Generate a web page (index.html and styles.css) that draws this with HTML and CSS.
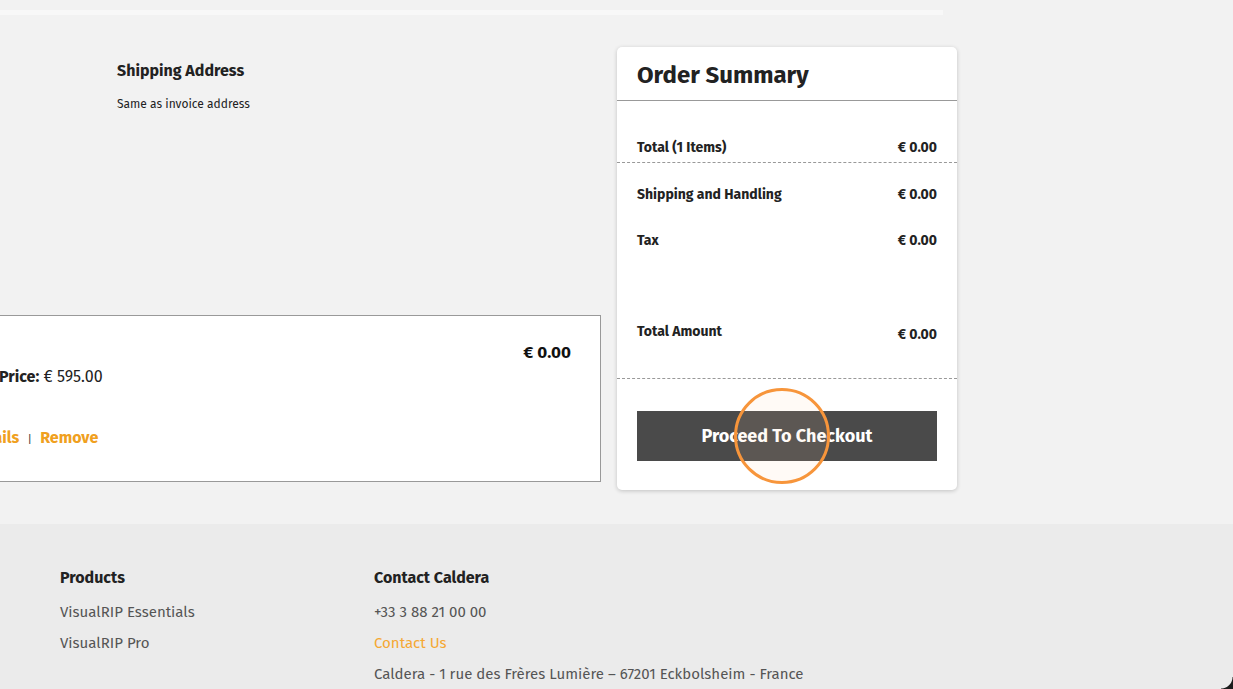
FILE: index.html
```html
<!DOCTYPE html>
<html lang="en">
<head>
    <meta charset="UTF-8">
    <meta name="viewport" content="width=device-width, initial-scale=1.0">
    <title>Checkout - Caldera Store</title>
    <link rel="stylesheet" href="styles.css">
</head>
<body>
    <div class="top-strip"></div>

    <main class="checkout">
        <div class="checkout-left">
            <div class="address-block">
                <h3>Shipping Address</h3>
                <p>Same as invoice address</p>
            </div>

            <div class="cart-item">
                <div class="cart-item-info">
                    <p class="cart-item-price"><strong>Price:</strong> € 595.00</p>
                    <div class="cart-item-links">
                        <a href="#">View Details</a>
                        <span class="sep">|</span>
                        <a href="#">Remove</a>
                    </div>
                </div>
                <div class="cart-item-total">€ 0.00</div>
            </div>
        </div>

        <aside class="summary-card">
            <div class="summary-header">
                <h2>Order Summary</h2>
            </div>
            <div class="summary-body">
                <div class="summary-row first">
                    <span>Total (1 Items)</span>
                    <span>€ 0.00</span>
                </div>
                <div class="summary-row shipping">
                    <span>Shipping and Handling</span>
                    <span>€ 0.00</span>
                </div>
                <div class="summary-row tax">
                    <span>Tax</span>
                    <span>€ 0.00</span>
                </div>
                <div class="summary-row total">
                    <span>Total Amount</span>
                    <span class="total-value">€ 0.00</span>
                </div>
            </div>
            <div class="summary-footer">
                <button type="button" class="checkout-btn">
                    Proceed To Checkout
                    <span class="click-ring"></span>
                </button>
            </div>
        </aside>
    </main>

    <footer class="site-footer">
        <div class="footer-col products">
            <h4>Products</h4>
            <a href="#">VisualRIP Essentials</a>
            <a href="#">VisualRIP Pro</a>
        </div>
        <div class="footer-col contact">
            <h4>Contact Caldera</h4>
            <span>+33 3 88 21 00 00</span>
            <a href="#" class="highlight">Contact Us</a>
            <span>Caldera - 1 rue des Frères Lumière – 67201 Eckbolsheim - France</span>
        </div>
    </footer>

    <div class="window-corner"></div>
</body>
</html>
```

FILE: styles.css
```css
body {
    font-family: 'Fira Sans', 'Lato', 'Liberation Sans', sans-serif;
    background-color: #f2f2f2;
    color: #222;
    margin: 0;
    padding: 0;
}

a {
    text-decoration: none;
}

.top-strip {
    width: 943px;
    height: 5px;
    margin-top: 10px;
    background-color: #f8f8f8;
}

/* main checkout area */
.checkout {
    display: grid;
    grid-template-columns: 601px 340px;
    column-gap: 16px;
    margin-top: 32px;
    padding-bottom: 34px;
}

.checkout-left {
    display: flex;
    flex-direction: column;
}

.address-block {
    padding: 14px 0 0 117px;
}

.address-block h3 {
    font-size: 16px;
    font-weight: 700;
    margin: 0;
    line-height: 20px;
}

.address-block p {
    font-size: 12px;
    margin: 15px 0 0;
    line-height: 16px;
}

.cart-item {
    display: flex;
    justify-content: space-between;
    margin-top: 203px;
    margin-left: -60px;
    height: 165px;
    background-color: #fff;
    border: 1px solid #999;
    padding: 0 29px 0 0;
}

.cart-item-info {
    padding: 51px 0 0 58px;
}

.cart-item-price {
    font-size: 16px;
    margin: 0;
    line-height: 20px;
}

.cart-item-links {
    margin: 41px 0 0 -69px;
    font-size: 16px;
    line-height: 20px;
}

.cart-item-links a {
    color: #f0a020;
    font-weight: 700;
}

.cart-item-links .sep {
    font-size: 11px;
    margin: 0 4px;
    color: #333;
}

.cart-item-total {
    font-size: 17px;
    font-weight: 700;
    padding-top: 26px;
    color: #111;
}

/* order summary card */
.summary-card {
    align-self: start;
    background-color: #fff;
    border-radius: 5px;
    box-shadow: 0 1px 4px rgba(0, 0, 0, 0.2);
}

.summary-header {
    padding: 13px 20px 9px;
    border-bottom: 1px solid #999;
}

.summary-header h2 {
    font-size: 24px;
    font-weight: 700;
    margin: 0;
    line-height: 31px;
}

.summary-row {
    display: flex;
    justify-content: space-between;
    padding: 0 20px;
    font-size: 14px;
    font-weight: 700;
    line-height: 18px;
}

.summary-row.first {
    padding-top: 38px;
    padding-bottom: 5px;
    border-bottom: 1px dashed #999;
}

.summary-row.shipping {
    padding-top: 23px;
}

.summary-row.tax {
    padding-top: 28px;
}

.summary-row.total {
    align-items: flex-start;
    padding-top: 73px;
    padding-bottom: 34px;
    border-bottom: 1px dashed #999;
}

.total-value {
    margin-top: 3px;
}

.summary-footer {
    padding: 32px 20px 29px;
}

.checkout-btn {
    position: relative;
    width: 100%;
    height: 50px;
    border: none;
    background-color: #4a4a4a;
    color: #fff;
    font-family: inherit;
    font-size: 18px;
    font-weight: 700;
    cursor: pointer;
}

/* click highlight drawn over the button */
.click-ring {
    position: absolute;
    left: 97px;
    top: -23px;
    width: 90px;
    height: 90px;
    border: 3px solid #f7953b;
    border-radius: 50%;
    background-color: rgba(255, 210, 170, 0.1);
}

/* footer */
.site-footer {
    display: flex;
    background-color: #ebebeb;
    padding: 44px 0 0 60px;
    height: 200px;
}

.footer-col {
    display: flex;
    flex-direction: column;
    gap: 11px;
    font-size: 15px;
    line-height: 20px;
    color: #555;
}

.footer-col.products {
    width: 314px;
}

.footer-col h4 {
    margin: 0 0 3px;
    font-size: 16px;
    color: #222;
}

.footer-col a {
    color: #555;
}

.footer-col a.highlight {
    color: #f5a833;
}

.window-corner {
    position: fixed;
    right: 0;
    bottom: 0;
    width: 12px;
    height: 12px;
    background: radial-gradient(circle at 0 0, transparent 11px, #1c1c1c 12px);
}
```
